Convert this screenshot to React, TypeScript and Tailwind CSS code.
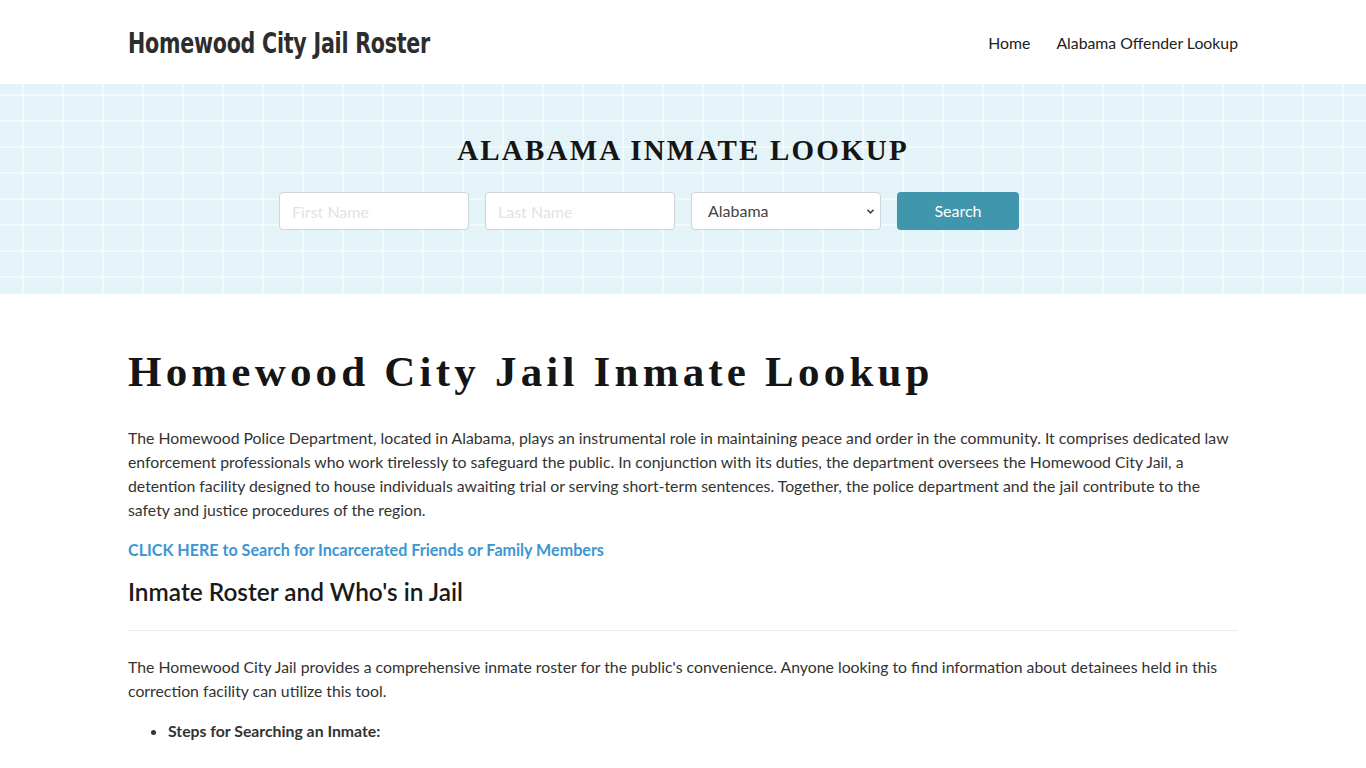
import React from "react";

const lato = { fontFamily: "Lato, 'Open Sans', sans-serif" };

export default function App() {
  return (
    <div className="min-h-screen bg-white text-[#333]" style={lato}>
      {/* Header */}
      <header className="h-[84px] bg-white">
        <div className="max-w-[1110px] mx-auto h-full flex items-center justify-between">
          <a
            href="#"
            className="inline-block mt-[3px] text-[29px] font-bold text-[#2d2d2d] tracking-[-0.3px] scale-x-[0.79] origin-left whitespace-nowrap"
            style={{ fontFamily: "'DejaVu Sans Condensed', 'DejaVu Sans', sans-serif" }}
          >
            Homewood City Jail Roster
          </a>
          <nav className="flex items-center gap-[26px] mt-[2px] text-[15.8px] text-[#222]">
            <a href="#">Home</a>
            <a href="#">Alabama Offender Lookup</a>
          </nav>
        </div>
      </header>

      {/* Search band */}
      <section className="h-[210px] bg-[#e3f3f8] bg-[linear-gradient(90deg,rgba(255,255,255,0.5)_2px,transparent_2px),linear-gradient(0deg,rgba(255,255,255,0.5)_2px,transparent_2px)] bg-[size:40px_26px] bg-[position:22px_12px] flex flex-col items-center pt-[52px]">
        <h2
          className="text-[29px] font-bold tracking-[2.2px] text-[#151515] leading-none"
          style={{ fontFamily: "'Liberation Serif', 'Times New Roman', serif" }}
        >
          ALABAMA INMATE LOOKUP
        </h2>
        <form className="mt-[27px] grid grid-cols-[190px_190px_190px_190px] gap-[16px]">
          <input
            placeholder="First Name"
            className="h-[38px] rounded border border-[#ced4da] bg-white px-3 text-[16px] placeholder:text-[#dfe3e6] outline-none"
          />
          <input
            placeholder="Last Name"
            className="h-[38px] rounded border border-[#ced4da] bg-white px-3 text-[16px] placeholder:text-[#dfe3e6] outline-none"
          />
          <div className="relative">
            <select className="appearance-none w-full h-[38px] rounded border border-[#ced4da] bg-white pl-4 pr-8 text-[16px] text-[#444] outline-none">
              <option>Alabama</option>
            </select>
            <svg
              className="absolute right-[6px] top-[15px] w-[9px] h-[9px] text-[#444]"
              viewBox="0 0 10 10"
              fill="none"
              stroke="currentColor"
              strokeWidth="1.8"
            >
              <path d="M1.5 3l3.5 3.5L8.5 3" />
            </svg>
          </div>
          <button
            type="button"
            className="w-[122px] h-[38px] rounded bg-[#3f96ad] text-white text-[16px]"
          >
            Search
          </button>
        </form>
      </section>

      {/* Main content */}
      <main className="max-w-[1110px] mx-auto pt-[52px]">
        <h1
          className="text-[43px] font-bold tracking-[4.2px] text-[#151515] leading-[52px]"
          style={{ fontFamily: "'Liberation Serif', 'Times New Roman', serif" }}
        >
          Homewood City Jail Inmate Lookup
        </h1>
        <p className="mt-[28px] text-[15.8px] leading-[24px] text-[#333]">
          The Homewood Police Department, located in Alabama, plays an instrumental role in maintaining peace and order in the community. It comprises dedicated law enforcement professionals who work tirelessly to safeguard the public. In conjunction with its duties, the department oversees the Homewood City Jail, a detention facility designed to house individuals awaiting trial or serving short-term sentences. Together, the police department and the jail contribute to the safety and justice procedures of the region.
        </p>
        <a href="#" className="block mt-[16px] text-[16.1px] leading-[24px] font-bold text-[#3b97d3]">
          CLICK HERE to Search for Incarcerated Friends or Family Members
        </a>
        <h2 className="mt-[15px] text-[24.4px] leading-[30px] font-semibold text-[#1a1a1a]">
          Inmate Roster and Who's in Jail
        </h2>
        <hr className="mt-[23px] border-0 border-t border-[#eaeaea]" />
        <p className="mt-[24px] text-[15.8px] leading-[24px] text-[#333]">
          The Homewood City Jail provides a comprehensive inmate roster for the public's convenience. Anyone looking to find information about detainees held in this correction facility can utilize this tool.
        </p>
        <ul className="mt-[16px] list-disc pl-[40px] text-[15.8px] leading-[24px]">
          <li className="font-bold">Steps for Searching an Inmate:</li>
        </ul>
      </main>
    </div>
  );
}
